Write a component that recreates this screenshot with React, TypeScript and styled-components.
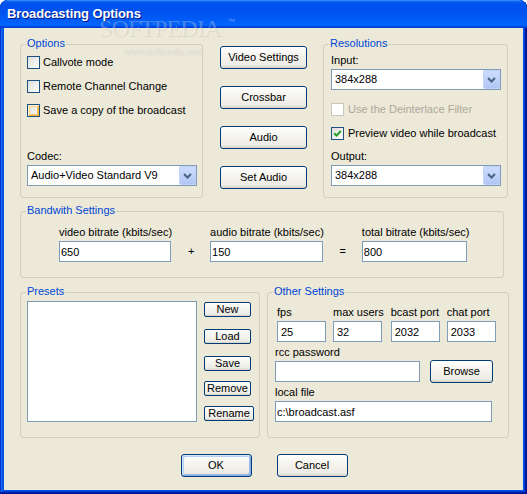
import React from "react";
import styled, { createGlobalStyle, css } from "styled-components";

const GlobalStyle = createGlobalStyle`
  html, body { margin: 0; padding: 0; background: #ffffff; }
  body { font-family: "Liberation Sans", Arial, sans-serif; font-size: 11px; color: #000; }
  *, *::before, *::after { box-sizing: border-box; }
`;

const FONT = `"Liberation Sans", Arial, sans-serif`;

const Window = styled.div`
  position: relative;
  width: 527px;
  height: 494px;
  display: flex;
  flex-direction: column;
  background: #0054e3;
  border-radius: 8px 8px 0 0;
  box-shadow: inset -1px -1px #00138c, inset 1px 1px #0831d9,
    inset -2px -2px #001ea0, inset 2px 2px #166aee,
    inset -3px -3px #003bda, inset 3px 3px #0855dd;
  overflow: hidden;
`;

const TitleBar = styled.div`
  flex: none;
  height: 28px;
  display: flex;
  align-items: center;
  padding: 0 0 1px 7px;
  border-radius: 8px 8px 0 0;
  background: linear-gradient(
    180deg,
    #3d95ff 0%,
    #0a5ff0 6%,
    #0053ee 12%,
    #0050ee 40%,
    #0062fa 84%,
    #0064fc 90%,
    #0050e6 94%,
    #003dd7 97%,
    #003dd7 100%
  );
`;

const Title = styled.span`
  color: #ffffff;
  font: bold 13px ${FONT};
  text-shadow: 1px 1px 0 #0a1883;
  letter-spacing: -0.1px;
`;

const Body = styled.div`
  flex: 1;
  margin: 0 4px 4px;
  background: #ece9d8;
  padding: 16px 15px 0 16px;
  display: flex;
  flex-direction: column;
`;

const Row = styled.div<{ $gap: number; $mt?: number }>`
  display: flex;
  align-items: flex-start;
  gap: ${(p) => p.$gap}px;
  margin-top: ${(p) => p.$mt ?? 0}px;
`;

const Group = styled.div<{ $w: number; $h: number }>`
  position: relative;
  flex: none;
  width: ${(p) => p.$w}px;
  height: ${(p) => p.$h}px;
  border: 1px solid #d0d0bf;
  border-radius: 3px;
`;

const Legend = styled.span`
  position: absolute;
  top: -8px;
  left: 5px;
  padding: 0 1px;
  line-height: 13px;
  background: #ece9d8;
  color: #0046d5;
  white-space: nowrap;
`;

const StackGroup = styled(Group)<{ $pad: string }>`
  display: flex;
  flex-direction: column;
  padding: ${(p) => p.$pad};
`;

const CheckList = styled.div`
  display: flex;
  flex-direction: column;
  gap: 11px;
`;

const BottomBlock = styled.div`
  margin-top: auto;
  display: flex;
  flex-direction: column;
`;

const CheckRow = styled.div<{ $disabled?: boolean; $mt?: number; $gap?: number }>`
  display: flex;
  align-items: center;
  gap: ${(p) => p.$gap ?? 3}px;
  height: 13px;
  line-height: 13px;
  white-space: nowrap;
  margin-top: ${(p) => p.$mt ?? 0}px;
  color: ${(p) => (p.$disabled ? "#aca899" : "#000")};
`;

type BoxState = "normal" | "hover" | "disabled";

const Box = styled.span<{ $state: BoxState }>`
  flex: none;
  width: 13px;
  height: 13px;
  display: flex;
  align-items: center;
  justify-content: center;
  border: 1px solid ${(p) => (p.$state === "disabled" ? "#cac8bb" : "#1c5180")};
  background: ${(p) =>
    p.$state === "disabled" ? "#ffffff" : "linear-gradient(135deg, #dcdcd7 0%, #ffffff 100%)"};
  ${(p) =>
    p.$state === "hover" &&
    css`
      box-shadow: inset 1px 1px 0 #fff0cf, inset -1px -1px 0 #f8b33a,
        inset 2px 2px 0 #fbd88a, inset -2px -2px 0 #f9c462;
    `}
`;

const FieldLabel = styled.span<{ $mt?: number }>`
  display: block;
  line-height: 13px;
  height: 13px;
  margin-top: ${(p) => p.$mt ?? 0}px;
  margin-bottom: 2px;
  white-space: nowrap;
`;

const SelectBox = styled.div<{ $w: number }>`
  width: ${(p) => p.$w}px;
  height: 21px;
  border: 1px solid #7f9db9;
  background: #ffffff;
  display: flex;
  align-items: stretch;
`;

const SelectValue = styled.span`
  flex: 1;
  padding-left: 3px;
  line-height: 19px;
  white-space: nowrap;
  overflow: hidden;
`;

const DropButton = styled.span`
  flex: none;
  width: 17px;
  display: flex;
  align-items: center;
  justify-content: center;
  border: 1px solid #c3d2f5;
  border-radius: 1px;
  background: linear-gradient(180deg, #cddbfc 0%, #c1d3fb 45%, #b2c6f6 100%);
`;

const XPButton = styled.button<{ $w: number; $h: number; $default?: boolean; $mt?: number; $radius?: number }>`
  flex: none;
  width: ${(p) => p.$w}px;
  height: ${(p) => p.$h}px;
  margin: 0;
  margin-top: ${(p) => p.$mt ?? 0}px;
  padding: 0;
  font: 11px ${FONT};
  line-height: ${(p) => p.$h - 2}px;
  color: #000;
  text-align: center;
  white-space: nowrap;
  border: 1px solid #003c74;
  border-radius: ${(p) => p.$radius ?? 3}px;
  background: linear-gradient(180deg, #ffffff 0%, #f6f5f0 35%, #ecebe6 86%, #d6d0c5 100%);
  ${(p) =>
    p.$default &&
    css`
      box-shadow: inset 1px 1px 0 #cee7ff, inset -1px -1px 0 #89ade4,
        inset 2px 2px 0 #b6cff3, inset -2px -2px 0 #98b8ea;
    `}
`;

const ButtonColumn = styled.div`
  flex: none;
  display: flex;
  flex-direction: column;
  gap: 17px;
  padding-top: 2px;
  margin: 0 16px 0 17px;
`;

const TextBox = styled.input<{ $w: number; $pad?: number }>`
  display: block;
  width: ${(p) => p.$w}px;
  height: 21px;
  margin: 0;
  border: 1px solid #7f9db9;
  border-radius: 0;
  background: #ffffff;
  padding: 0 0 0 ${(p) => p.$pad ?? 3}px;
  font: 11px ${FONT};
  color: #000;
  outline: none;
`;

const BandGroup = styled(Group)`
  display: flex;
  align-items: flex-start;
  padding: 14px 0 0 38px;
`;

const BandRow = styled.div`
  display: flex;
  align-items: flex-end;
`;

const FieldCol = styled.div`
  display: flex;
  flex-direction: column;
`;

const Sign = styled.span`
  flex: none;
  width: 38px;
  height: 21px;
  line-height: 21px;
  text-align: center;
`;

const PresetsGroup = styled(Group)`
  display: flex;
  align-items: flex-start;
  gap: 7px;
  padding: 8px 0 0 6px;
`;

const ListBox = styled.div`
  flex: none;
  width: 170px;
  height: 121px;
  border: 1px solid #7f9db9;
  background: #ffffff;
`;

const PresetButtons = styled.div`
  display: flex;
  flex-direction: column;
  align-items: flex-start;
  padding-top: 1px;
`;

const OtherGroup = styled(Group)`
  display: flex;
  flex-direction: column;
  padding: 13px 0 0 7px;
`;

const PortRow = styled.div`
  display: flex;
  gap: 7px;
  margin-left: 2px;
`;

const BrowseRow = styled.div`
  display: flex;
  align-items: center;
  gap: 10px;
  height: 21px;
`;

const DialogButtons = styled.div`
  display: flex;
  justify-content: center;
  gap: 25px;
  margin-top: 16px;
`;

const WatermarkLogo = styled.span`
  position: absolute;
  left: 99px;
  top: 16px;
  font: 24px "Liberation Serif", "Times New Roman", serif;
  line-height: 24px;
  letter-spacing: -0.9px;
  color: rgba(255, 255, 255, 0.26);
  text-shadow: 1px 1px 0 rgba(90, 90, 90, 0.12);
  pointer-events: none;
`;

const WatermarkTM = styled.span`
  position: absolute;
  left: 227px;
  top: 17px;
  font: 8px "Liberation Sans", Arial, sans-serif;
  color: rgba(255, 255, 255, 0.35);
  pointer-events: none;
`;

const WatermarkUrl = styled.span`
  position: absolute;
  left: 124px;
  top: 46px;
  font: 10px "Liberation Serif", "Times New Roman", serif;
  line-height: 12px;
  color: rgba(255, 255, 255, 0.55);
  text-shadow: 0 0 1px rgba(110, 110, 110, 0.35);
  pointer-events: none;
`;

const Chevron = () => (
  <svg width="9" height="6" viewBox="0 0 9 6">
    <polyline points="1,1 4.5,4.5 8,1" fill="none" stroke="#4d6185" strokeWidth="2" />
  </svg>
);

const CheckMark = () => (
  <svg width="9" height="9" viewBox="0 0 9 9">
    <polyline points="1.2,4.2 3.5,6.6 7.8,2" fill="none" stroke="#21a121" strokeWidth="2" />
  </svg>
);

const Select: React.FC<{ w: number; value: string }> = ({ w, value }) => (
  <SelectBox $w={w}>
    <SelectValue>{value}</SelectValue>
    <DropButton>
      <Chevron />
    </DropButton>
  </SelectBox>
);

const Check: React.FC<{
  label: string;
  state?: BoxState;
  checked?: boolean;
  mt?: number;
  gap?: number;
}> = ({ label, state = "normal", checked, mt, gap }) => (
  <CheckRow $disabled={state === "disabled"} $mt={mt} $gap={gap}>
    <Box $state={state}>{checked && <CheckMark />}</Box>
    <span>{label}</span>
  </CheckRow>
);

const Field: React.FC<{ label: string; w: number; value: string; pad?: number }> = ({
  label,
  w,
  value,
  pad,
}) => (
  <FieldCol>
    <FieldLabel>{label}</FieldLabel>
    <TextBox $w={w} $pad={pad} readOnly value={value} />
  </FieldCol>
);

export default function App() {
  return (
    <>
      <GlobalStyle />
      <Window>
        <TitleBar>
          <Title>Broadcasting Options</Title>
        </TitleBar>
        <Body>
          <Row $gap={0}>
            <StackGroup $w={183} $h={154} $pad="11px 6px 11px 6px">
              <Legend>Options</Legend>
              <CheckList>
                <Check label="Callvote mode" />
                <Check label="Remote Channel Change" />
                <Check label="Save a copy of the broadcast" state="hover" />
              </CheckList>
              <BottomBlock>
                <FieldLabel>Codec:</FieldLabel>
                <Select w={170} value="Audio+Video Standard V9" />
              </BottomBlock>
            </StackGroup>

            <ButtonColumn>
              <XPButton $w={87} $h={23}>Video Settings</XPButton>
              <XPButton $w={87} $h={23}>Crossbar</XPButton>
              <XPButton $w={87} $h={23}>Audio</XPButton>
              <XPButton $w={87} $h={23}>Set Audio</XPButton>
            </ButtonColumn>

            <StackGroup $w={185} $h={154} $pad="9px 7px 11px 7px">
              <Legend>Resolutions</Legend>
              <FieldLabel>Input:</FieldLabel>
              <Select w={170} value="384x288" />
              <Check label="Use the Deinterlace Filter" state="disabled" mt={13} gap={4} />
              <Check label="Preview video while broadcast" checked mt={11} gap={4} />
              <BottomBlock>
                <FieldLabel>Output:</FieldLabel>
                <Select w={170} value="384x288" />
              </BottomBlock>
            </StackGroup>
          </Row>

          <Row $gap={0} $mt={13}>
            <BandGroup $w={484} $h={67}>
              <Legend>Bandwith Settings</Legend>
              <BandRow>
                <Field label="video bitrate (kbits/sec)" w={112} value="650" pad={1} />
                <Sign>+</Sign>
                <Field label="audio bitrate (kbits/sec)" w={113} value="150" pad={1} />
                <Sign>=</Sign>
                <Field label="total bitrate (kbits/sec)" w={105} value="800" pad={1} />
              </BandRow>
            </BandGroup>
          </Row>

          <Row $gap={7} $mt={14}>
            <PresetsGroup $w={240} $h={146}>
              <Legend>Presets</Legend>
              <ListBox />
              <PresetButtons>
                <XPButton $w={47} $h={15} $radius={2}>New</XPButton>
                <XPButton $w={47} $h={15} $radius={2} $mt={12}>Load</XPButton>
                <XPButton $w={47} $h={15} $radius={2} $mt={12}>Save</XPButton>
                <XPButton $w={47} $h={15} $radius={2} $mt={10}>Remove</XPButton>
                <XPButton $w={50} $h={15} $radius={2} $mt={10}>Rename</XPButton>
              </PresetButtons>
            </PresetsGroup>

            <OtherGroup $w={242} $h={146}>
              <Legend>Other Settings</Legend>
              <PortRow>
                <Field label="fps" w={49} value="25" />
                <Field label="max users" w={49} value="32" />
                <Field label="bcast port" w={49} value="2032" />
                <Field label="chat port" w={49} value="2033" />
              </PortRow>
              <FieldLabel $mt={4}>rcc password</FieldLabel>
              <BrowseRow>
                <TextBox $w={145} readOnly value="" />
                <XPButton $w={63} $h={23}>Browse</XPButton>
              </BrowseRow>
              <FieldLabel $mt={4}>local file</FieldLabel>
              <TextBox $w={217} $pad={1} readOnly value="c:\broadcast.asf" />
            </OtherGroup>
          </Row>

          <DialogButtons>
            <XPButton $w={71} $h={23} $default>OK</XPButton>
            <XPButton $w={71} $h={23}>Cancel</XPButton>
          </DialogButtons>
        </Body>
        <WatermarkLogo>SOFTPEDIA</WatermarkLogo>
        <WatermarkTM>™</WatermarkTM>
        <WatermarkUrl>www.softpedia.com</WatermarkUrl>
      </Window>
    </>
  );
}
